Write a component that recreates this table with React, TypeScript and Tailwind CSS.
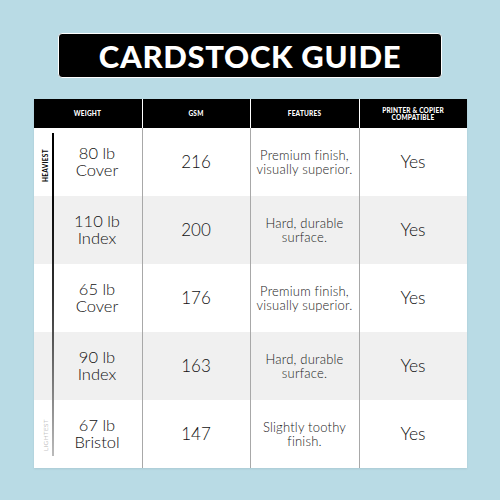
import React from "react";

const rows = [
  { weight: ["80 lb", "Cover"], gsm: "216", features: ["Premium finish,", "visually superior."] },
  { weight: ["110 lb", "Index"], gsm: "200", features: ["Hard, durable", "surface."] },
  { weight: ["65 lb", "Cover"], gsm: "176", features: ["Premium finish,", "visually superior."] },
  { weight: ["90 lb", "Index"], gsm: "163", features: ["Hard, durable", "surface."] },
  { weight: ["67 lb", "Bristol"], gsm: "147", features: ["Slightly toothy", "finish."] },
];

export default function App() {
  return (
    <div className="w-[500px] h-[500px] bg-[#b9dbe5] flex flex-col items-center pt-[33px] font-['Lato',sans-serif]">
      {/* Title */}
      <div className="w-[384px] h-[45px] bg-black rounded-[4px] border border-white flex items-center justify-center">
        <h1 className="text-white font-black text-[31px] tracking-[0.7px] leading-none pt-[1px]">
          CARDSTOCK GUIDE
        </h1>
      </div>

      {/* Table */}
      <div className="mt-[21px] w-[433px] bg-white shadow-[0_1px_2px_rgba(0,0,0,0.08)]">
        <div className="grid grid-cols-[109px_108px_109px_107px] h-[29px] bg-black text-white text-[6.5px] font-black tracking-[0.2px]">
          <div className="flex items-center justify-center border-r border-white">WEIGHT</div>
          <div className="flex items-center justify-center border-r border-white">GSM</div>
          <div className="flex items-center justify-center border-r border-white">FEATURES</div>
          <div className="flex flex-col items-center justify-center text-center leading-[7px]">
            <span>PRINTER &amp; COPIER</span>
            <span>COMPATIBLE</span>
          </div>
        </div>

        <div className="relative">
          {rows.map((r, i) => (
            <div
              key={i}
              className={`grid grid-cols-[109px_108px_109px_107px] h-[68px] text-[#111] font-light ${
                i % 2 === 1 ? "bg-[#f0f0f0]" : "bg-white"
              }`}
            >
              <div className="flex flex-col items-center justify-center pl-[19px] border-r border-[#a8a8a8] text-[16.5px] leading-[17px] text-center">
                <span>{r.weight[0]}</span>
                <span>{r.weight[1]}</span>
              </div>
              <div className="flex items-center justify-center border-r border-[#a8a8a8] text-[17px]">
                {r.gsm}
              </div>
              <div className="flex flex-col items-center justify-center border-r border-[#a8a8a8] text-[13px] leading-[14px] text-center text-[#222] tracking-[0.2px]">
                <span>{r.features[0]}</span>
                <span>{r.features[1]}</span>
              </div>
              <div className="flex items-center justify-center text-[17.5px]">Yes</div>
            </div>
          ))}

          {/* Heaviest → lightest scale */}
          <div className="absolute left-0 top-0 bottom-0 w-[19px] pointer-events-none">
            <div className="absolute left-[18px] top-[5px] bottom-[12px] w-[2px] bg-gradient-to-b from-black via-[#333] to-[#bbb]" />
            <div className="absolute left-[9px] top-[15px] origin-top-left rotate-[-90deg] translate-y-[39px] w-[39px]">
              <span className="block text-[6.5px] font-bold tracking-[0.3px] text-black leading-none">HEAVIEST</span>
            </div>
            <div className="absolute left-[9px] top-[285px] origin-top-left rotate-[-90deg] translate-y-[38px] w-[38px]">
              <span className="block text-[6.5px] font-light tracking-[0.3px] text-[#888] leading-none">LIGHTEST</span>
            </div>
          </div>
        </div>
      </div>
    </div>
  );
}
